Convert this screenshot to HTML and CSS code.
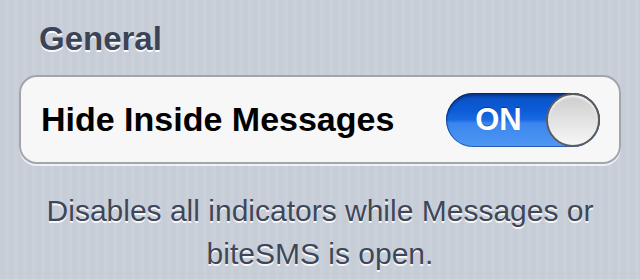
FILE: index.html
```html
<!DOCTYPE html>
<html>
<head>
<meta charset="utf-8">
<link rel="stylesheet" href="styles.css">
</head>
<body>
<div class="page">
  <h2 class="group-title">General</h2>
  <div class="card">
    <div class="row">
      <span class="row-label">Hide Inside Messages</span>
      <div class="switch">
        <span class="switch-text">ON</span>
        <span class="knob"></span>
      </div>
    </div>
  </div>
  <p class="footer">Disables all indicators while Messages or<br>biteSMS is open.</p>
</div>
</body>
</html>
```
FILE: styles.css
```css
html, body {
  margin: 0;
  padding: 0;
}
body {
  width: 640px;
  height: 279px;
  overflow: hidden;
  font-family: "Liberation Sans", Arial, sans-serif;
  background-color: #c8ced8;
  background-image: repeating-linear-gradient(90deg, #c6cdd6 0px, #c6cdd6 5px, #cad0d9 5px, #cad0d9 9px);
}
.page {
  display: flex;
  flex-direction: column;
  padding-top: 19px;
}
.group-title {
  margin: 0 0 16px 39px;
  font-size: 33px;
  line-height: 40px;
  font-weight: bold;
  color: #3b4356;
  text-shadow: 0 2px 0 rgba(255, 255, 255, 0.9);
}
.card {
  margin: 0 19px;
  height: 89px;
  box-sizing: border-box;
  background: #f7f7f7;
  border: 2px solid #a2a6ac;
  border-radius: 18px;
  box-shadow: 0 2px 0 rgba(255, 255, 255, 0.7);
}
.row {
  height: 100%;
  display: flex;
  align-items: center;
  justify-content: space-between;
  padding: 0 19px 0 20px;
}
.row-label {
  font-size: 34px;
  font-weight: bold;
  color: #000;
  margin-top: -1px;
}
.switch {
  width: 154px;
  height: 54px;
  box-sizing: border-box;
  border-radius: 27px;
  display: flex;
  align-items: center;
  background: linear-gradient(to bottom, #0a4fc2 0%, #0c5bd6 30%, #1a6ae4 50%, #3b86ee 56%, #4f97f4 100%);
  box-shadow: inset 0 3px 3px rgba(0, 0, 0, 0.35), inset 0 0 0 1px rgba(0, 40, 120, 0.5);
}
.switch-text {
  flex: 1;
  text-align: center;
  color: #fff;
  font-size: 31px;
  font-weight: bold;
  padding-left: 5px;
  text-shadow: 0 -1px 0 rgba(0, 0, 0, 0.35);
}
.knob {
  width: 54px;
  height: 54px;
  box-sizing: border-box;
  border-radius: 50%;
  border: 2px solid #5b5d60;
  background: linear-gradient(to bottom, #cdcdcd 0%, #e2e2e2 50%, #f6f6f6 100%);
  box-shadow: inset 0 2px 2px rgba(255, 255, 255, 0.8);
}
.footer {
  margin: 25px 0 0;
  text-align: center;
  font-size: 30px;
  line-height: 43px;
  color: #3e4659;
  text-shadow: 0 2px 0 rgba(255, 255, 255, 0.85);
}
```
